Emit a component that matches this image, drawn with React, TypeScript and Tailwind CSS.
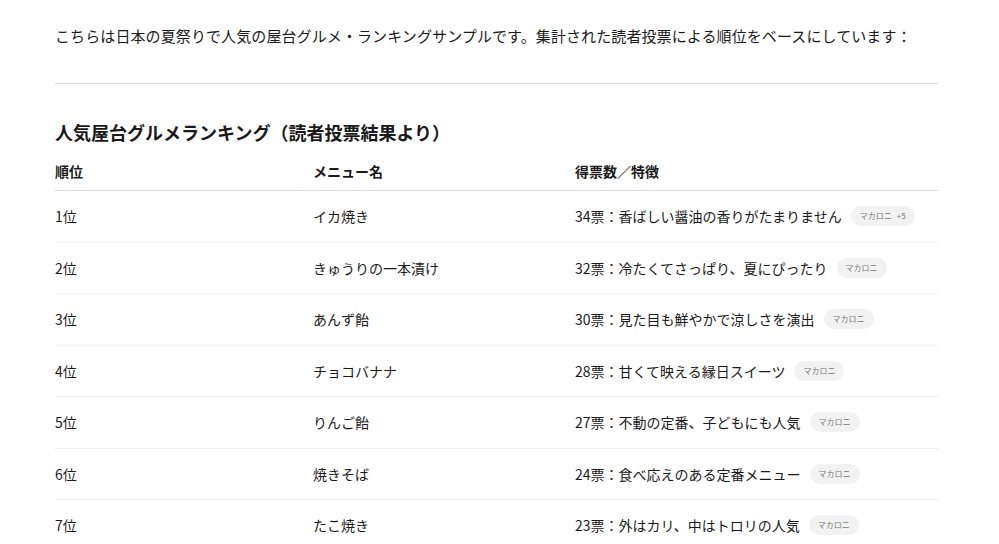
const rows = [
  { rank: "1位", menu: "イカ焼き", note: "34票：香ばしい醤油の香りがたまりません", badge: "マカロニ", extra: "+5" },
  { rank: "2位", menu: "きゅうりの一本漬け", note: "32票：冷たくてさっぱり、夏にぴったり", badge: "マカロニ" },
  { rank: "3位", menu: "あんず飴", note: "30票：見た目も鮮やかで涼しさを演出", badge: "マカロニ" },
  { rank: "4位", menu: "チョコバナナ", note: "28票：甘くて映える縁日スイーツ", badge: "マカロニ" },
  { rank: "5位", menu: "りんご飴", note: "27票：不動の定番、子どもにも人気", badge: "マカロニ" },
  { rank: "6位", menu: "焼きそば", note: "24票：食べ応えのある定番メニュー", badge: "マカロニ" },
  { rank: "7位", menu: "たこ焼き", note: "23票：外はカリ、中はトロリの人気", badge: "マカロニ" },
];

export default function App() {
  return (
    <div
      className="min-h-screen bg-white text-[#1a1a1a]"
      style={{ fontFamily: '"Noto Sans CJK JP", "Noto Sans", sans-serif' }}
    >
      <div className="ml-[55px] w-[883px] pt-[24px]">
        <p className="text-[15px] leading-6 tracking-[0.1px]">
          こちらは日本の夏祭りで人気の屋台グルメ・ランキングサンプルです。集計された読者投票による順位をベースにしています：
        </p>
        <hr className="mt-[35px] border-0 border-t border-[#dcdcdc]" />

        <h2 className="mt-[34px] text-[18px] font-bold leading-7">
          人気屋台グルメランキング（読者投票結果より）
        </h2>

        <div className="mt-[15px]">
          <div className="grid grid-cols-[258px_262px_1fr] border-b border-[#dcdcdc] pb-[9px] text-[14px] font-bold leading-5">
            <div>順位</div>
            <div>メニュー名</div>
            <div>得票数／特徴</div>
          </div>
          {rows.map((r) => (
            <div
              key={r.rank}
              className="grid h-[51.5px] grid-cols-[258px_262px_1fr] items-center border-b border-[#f0f0f0] text-[14px] leading-5"
            >
              <div>{r.rank}</div>
              <div>{r.menu}</div>
              <div className="flex items-center">
                <span>{r.note}</span>
                <span className="ml-[9px] flex h-[20px] items-center gap-[5px] rounded-full bg-[#f2f2f2] px-[9px] text-[8px] text-[#777]">
                  {r.badge}
                  {r.extra && <span>{r.extra}</span>}
                </span>
              </div>
            </div>
          ))}
        </div>
      </div>
    </div>
  );
}
